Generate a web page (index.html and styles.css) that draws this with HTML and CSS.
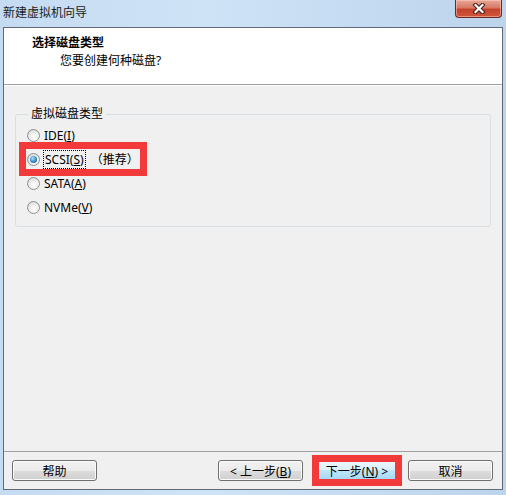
FILE: index.html
```html
<!DOCTYPE html>
<html lang="zh-CN">
<head>
    <meta charset="UTF-8">
    <title>新建虚拟机向导</title>
    <link rel="stylesheet" href="styles.css">
</head>
<body>
    <div class="window">
        <div class="titlebar">
            <span class="caption">新建虚拟机向导</span>
            <span class="close">
                <svg width="14" height="11" viewBox="0 0 14 11">
                    <path d="M3.5 2 L10.5 9 M10.5 2 L3.5 9" stroke="#4b1c16" stroke-width="4.2" stroke-linecap="square"/>
                    <path d="M3.5 2 L10.5 9 M10.5 2 L3.5 9" stroke="#ffffff" stroke-width="2.2" stroke-linecap="square"/>
                </svg>
            </span>
        </div>
        <div class="client">
            <div class="header">
                <div class="head-title">选择磁盘类型</div>
                <div class="head-sub">您要创建何种磁盘?</div>
            </div>
            <div class="content">
                <div class="group">
                    <div class="legend">虚拟磁盘类型</div>
                    <label class="option"><span class="radio"></span><span>IDE(<u>I</u>)</span></label>
                    <label class="option mark"><span class="radio checked"></span><span class="focus">SCSI(<u>S</u>)</span><span class="note">（推荐）</span></label>
                    <label class="option"><span class="radio"></span><span>SATA(<u>A</u>)</span></label>
                    <label class="option"><span class="radio"></span><span>NVMe(<u>V</u>)</span></label>
                </div>
            </div>
            <div class="footer">
                <button class="btn">帮助</button>
                <div class="nav">
                    <button class="btn back">&lt; 上一步(<u>B</u>)</button>
                    <span class="mark-btn"><button class="btn hot">下一步(<u>N</u>) &gt;</button></span>
                    <button class="btn">取消</button>
                </div>
            </div>
        </div>
    </div>
</body>
</html>
```

FILE: styles.css
```css
*{
    margin: 0;
    padding: 0;
    box-sizing: border-box;
}
body{
    width: 506px;
    height: 495px;
    overflow: hidden;
    font-family: "Noto Sans", "Noto Sans CJK SC", sans-serif;
    font-size: 12px;
    color: #000;
}
.window{
    height: 495px;
    display: flex;
    flex-direction: column;
    background: linear-gradient(90deg, #c5dbf1 0%, #cfe3f7 40%, #bcd4ec 100%);
}
.titlebar{
    height: 27px;
    display: flex;
    justify-content: space-between;
    align-items: flex-start;
}
.caption{
    padding-left: 3px;
    line-height: 26px;
    color: #1a1a1a;
}
.close{
    width: 47px;
    height: 18px;
    margin-right: 4px;
    display: flex;
    align-items: center;
    justify-content: center;
    border: 1px solid #6b2a20;
    border-top: none;
    border-radius: 0 0 4px 4px;
    background: linear-gradient(#e9a898 0%, #d77a66 45%, #c4432c 55%, #d0553b 100%);
    box-shadow: inset 0 0 0 1px rgba(255, 210, 200, 0.5);
}
.client{
    flex: 1;
    margin: 0 3px 5px 3px;
    border: 1px solid #5f6a74;
    background: #f0f0f0;
    display: flex;
    flex-direction: column;
}
.header{
    height: 57px;
    background: #fff;
    border-bottom: 1px solid #a0a0a0;
    padding: 7px 0 0 28px;
}
.head-title{
    font-weight: bold;
    line-height: 16px;
}
.head-sub{
    margin-top: 2px;
    margin-left: 28px;
    line-height: 16px;
}
.content{
    flex: 1;
    padding: 29px 10px 0 11px;
    box-shadow: inset 0 1px #fff;
}
.group{
    border: 1px solid #d5dfe5;
    border-radius: 3px;
    padding: 0 8px 7px 8px;
    width: 476px;
}
.legend{
    width: fit-content;
    margin: -8px 0 2px 4px;
    padding: 0 3px;
    line-height: 14px;
    background: #f0f0f0;
}
.option{
    height: 24px;
    width: fit-content;
    display: flex;
    align-items: center;
}
.radio{
    position: relative;
    width: 13px;
    height: 13px;
    margin: 0 4px 0 3px;
    border: 1px solid #8e8f8f;
    border-radius: 50%;
    background: radial-gradient(circle at 60% 65%, #ffffff 0%, #f4f4f4 35%, #cfcfcf 100%);
}
.radio.checked::after{
    content: "";
    position: absolute;
    left: 2px;
    top: 2px;
    width: 7px;
    height: 7px;
    border-radius: 50%;
    background: radial-gradient(circle at 40% 35%, #b8e8ff 0%, #3f95d6 45%, #164f86 100%);
}
.mark{
    width: 118px;
    outline: 7px solid #f23a3a;
    outline-offset: -2px;
}
.focus{
    outline: 1px dotted #000;
    padding: 0 1px;
}
.note{
    margin-left: 6px;
}
.footer{
    height: 38px;
    border-top: 1px solid #a0a0a0;
    padding: 0 9px 0 8px;
    display: flex;
    justify-content: space-between;
    align-items: center;
}
.nav{
    display: flex;
    align-items: center;
}
.btn{
    width: 85px;
    height: 21px;
    font: inherit;
    color: #000;
    border: 1px solid #707070;
    border-radius: 3px;
    background: linear-gradient(#f2f2f2 0%, #ebebeb 50%, #dddddd 50%, #cfcfcf 100%);
    box-shadow: inset 0 0 0 1px #fbfbfb;
}
.back{
    margin-right: 9px;
}
.mark-btn{
    display: flex;
    border: 7px solid #f23a3a;
    margin-right: 6px;
}
.btn.hot{
    width: 76px;
    height: 17px;
    border: none;
    border-radius: 0;
    box-shadow: none;
    background: linear-gradient(#eaf6fd 0%, #d9f0fc 50%, #bee6fd 50%, #a7d9f5 100%);
}
```
